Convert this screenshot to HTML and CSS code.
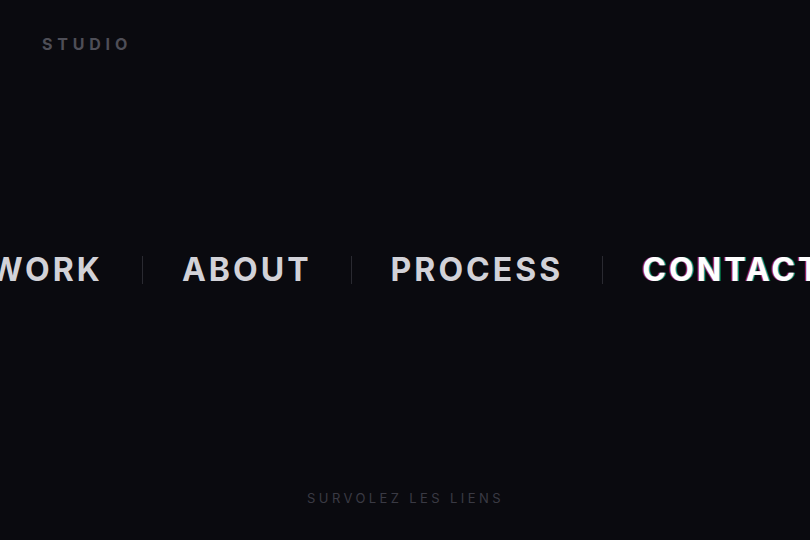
FILE: index.html
```html
<!DOCTYPE html>
<html lang="fr">
<head>
<meta charset="utf-8">
<link rel="stylesheet" href="styles.css">
</head>
<body>
<div class="page">
  <header class="brand">STUDIO</header>
  <nav class="nav">
    <a class="link">WORK</a>
    <span class="sep"></span>
    <a class="link">ABOUT</a>
    <span class="sep"></span>
    <a class="link">PROCESS</a>
    <span class="sep"></span>
    <a class="link active">CONTACT</a>
  </nav>
  <footer class="hint">SURVOLEZ LES LIENS</footer>
</div>
</body>
</html>
```
FILE: styles.css
```css
html, body {
  margin: 0;
  padding: 0;
  background: #0a0a0f;
  overflow: hidden;
}
.page {
  width: 810px;
  height: 540px;
  position: relative;
  display: flex;
  flex-direction: column;
  align-items: center;
  font-family: "Inter", "Liberation Sans", sans-serif;
}
.brand {
  align-self: flex-start;
  margin: 35px 0 0 42px;
  font-size: 16px;
  font-weight: 700;
  letter-spacing: 0.3em;
  color: #4e4e57;
  line-height: 18px;
}
.nav {
  margin-top: 197px;
  display: flex;
  align-items: center;
  justify-content: center;
  gap: 39px;
  white-space: nowrap;
  width: 810px;
  padding-left: 2px;
  box-sizing: border-box;
}
.link {
  font-size: 32px;
  font-weight: 700;
  letter-spacing: 0.095em;
  color: #d2d2d8;
  line-height: 40px;
  flex: none;
}
.link.active {
  color: #ffffff;
  text-shadow: -1.5px 0 0 rgba(255, 40, 80, 0.65), 1.5px 0 0 rgba(0, 230, 255, 0.65);
}
.sep {
  width: 1px;
  height: 28px;
  background: #2a2a31;
  flex: none;
}
.hint {
  margin-top: auto;
  margin-bottom: 34px;
  font-size: 13px;
  letter-spacing: 3.4px;
  color: #3a3a44;
  line-height: 16px;
  padding-left: 1px;
}
```
